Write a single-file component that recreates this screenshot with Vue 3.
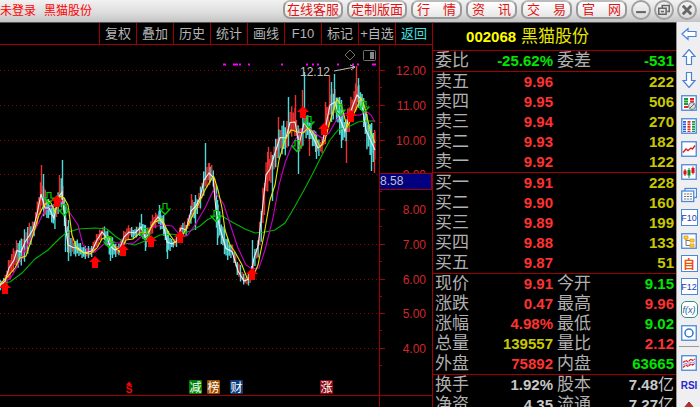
<template>
  <div class="terminal">

    <!-- 标题栏 -->
    <header class="titlebar">
      <div class="title-text">
        <span>未登录</span>
        <span>黑猫股份</span>
      </div>
      <div class="title-actions">
        <button v-for="p in pills" :key="p" type="button" class="pill">{{ p }}</button>
      </div>
      <div class="win-actions">
        <button type="button" class="win-btn" aria-label="最小化">
          <svg viewBox="0 0 20 20"><path d="M3 13h14" stroke-width="3" /></svg>
        </button>
        <button type="button" class="win-btn" aria-label="还原">
          <svg viewBox="0 0 20 20"><path d="M7.500 7V3.500h10v8.500h-3M2.500 7.500h10.500v8.500h-10.500zM5.500 12h4.500" stroke-width="2.200" /></svg>
        </button>
        <button type="button" class="win-btn" aria-label="关闭">
          <svg viewBox="0 0 20 20"><path d="M4 4l12 12M16 4l-12 12" stroke-width="4" /></svg>
        </button>
      </div>
    </header>

    <main class="body">
      <!-- K 线区 -->
      <section class="chart-pane">
        <nav class="toolbar">
          <button
            v-for="t in tools"
            :key="t"
            type="button"
            class="tool"
            :class="{ back: t === '返回' }"
          >{{ t }}</button>
        </nav>

        <svg class="chart" viewBox="0 45 432 362" preserveAspectRatio="xMinYMin meet">
          <!-- 网格与坐标轴 -->
          <g class="grid">
            <line v-for="g in gridLines" :key="g.label" x1="0" x2="379" :y1="g.y" :y2="g.y" />
          </g>
          <g class="axis">
            <path d="M379.500 45V407M0 395.500H432" />
            <path v-for="g in gridLines" :key="g.label" :d="`M380 ${g.y}h5M380 ${g.y + 17}h2`" />
          </g>
          <g class="axis-label">
            <text v-for="g in gridLines" :key="g.label" x="426" :y="g.y + 4.500">{{ g.label }}</text>
          </g>

          <!-- K 线 -->
          <path class="bar up" :d="upBars" />
          <path class="bar down" :d="downBars" />

          <!-- 均线 -->
          <polyline
            v-for="l in lines"
            :key="l.color"
            :points="l.points"
            :stroke="l.color"
            fill="none"
            stroke-width="1.100"
          />

          <!-- 买卖箭头 -->
          <path
            v-for="(a, i) in sells"
            :key="'s' + i"
            class="sell"
            :transform="`translate(${a[0]} ${a[1]})`"
            d="M-2 -5.500H2V0H5L0 5.500L-5 0H-2z"
          />
          <path
            v-for="(a, i) in buys"
            :key="'b' + i"
            class="buy"
            :transform="`translate(${a[0]} ${a[1]})`"
            d="M0 -6L6 0H3V6H-3V0H-6z"
          />

          <!-- 顶部信号点 -->
          <path class="dots" d="M223 64.500h3M233 64.500h5M239 64.500h2M248 64.500h2M281 64.500h2M306 64.500h2M312 64.500h2M317 64.500h2M337 64.500h2M352 64.500h2M357 64.500h2M372 64.500h4" />
          <text class="peak" x="300" y="76">12.12</text>
          <path class="pointer" d="M334 71L355 67M350 65l5 2l-4 3" />
          <path class="tag" d="M350 50l5 5l-5 5l-5 -5z" />
          <rect class="tag" x="363.500" y="50.500" width="12" height="10" rx="1" />
          <rect class="tag-fill" x="370" y="52" width="4" height="7" />

          <!-- 当前光标价 -->
          <rect class="cursor" x="379.500" y="173.500" width="52" height="16" />
          <text class="cursor-text" x="380" y="185">8.58</text>

          <!-- 事件标记 -->
          <path d="M126 385l3 -3.500l3 3.500z" fill="#f00" />
          <text class="dollar" x="129" y="393">S</text>
          <g v-for="m in marks" :key="m.text">
            <rect :x="m.x" y="380" width="13" height="14" rx="1" :fill="m.color" />
            <text class="mark" :x="m.x + 6.500" y="391.500">{{ m.text }}</text>
          </g>
        </svg>
      </section>

      <!-- 盘口 -->
      <section class="quote">
        <h1 class="stock"><b>002068</b> 黑猫股份</h1>
        <table v-for="(rows, si) in sections" :key="si">
          <tbody>
            <tr v-for="r in rows" :key="r[0]">
              <th scope="row">{{ r[0] }}</th>
              <td :class="r[2]">{{ r[1] }}</td>
              <th scope="row">{{ r[3] }}</th>
              <td :class="r[5]">{{ r[4] }}<span v-if="r[6]" class="unit">{{ r[6] }}</span></td>
            </tr>
          </tbody>
        </table>
      </section>

      <!-- 右侧工具条 -->
      <aside class="side">
        <button type="button" aria-label="后退">
          <svg viewBox="0 0 16 16"><path class="arrow" d="M1 8L7 2.500V5.500H15V10.500H7V13.500z" /></svg>
        </button>
        <button type="button" aria-label="上移">
          <svg viewBox="0 0 16 16"><path class="arrow" d="M8 .500L14 7.500H10.500V15.500H5.500V7.500H2z" /></svg>
        </button>
        <button type="button" aria-label="下移">
          <svg viewBox="0 0 16 16"><path class="arrow" d="M8 15.500L14 8.500H10.500V.500H5.500V8.500H2z" /></svg>
        </button>
        <button type="button" aria-label="自选报价">
          <svg viewBox="0 0 16 16">
            <rect class="frame" x=".75" y=".75" width="14.500" height="14.500" />
            <path d="M3 4h4M3 6.500h4M3 9h4" stroke="#1a9a3a" stroke-width="1.800" />
            <path d="M9 4h4M9 6.500h4M3 12h4" stroke="#e02828" stroke-width="1.800" />
            <circle cx="11" cy="11" r="3.500" fill="#ddd" stroke="#777" />
            <path d="M9 13l4 -4" stroke="#666" />
          </svg>
        </button>
        <button type="button" aria-label="行情列表">
          <svg viewBox="0 0 16 16">
            <rect class="frame" x=".75" y=".75" width="14.500" height="14.500" />
            <path d="M3.500 3v11" stroke="#2f62d8" stroke-width="3" stroke-dasharray="1.800 .700" />
            <path d="M8 3v11" stroke="#e02828" stroke-width="3" stroke-dasharray="1.800 .700" />
            <path d="M12.500 3v11" stroke="#169b3c" stroke-width="3" stroke-dasharray="1.800 .700" />
          </svg>
        </button>
        <button type="button" aria-label="分时走势">
          <svg viewBox="0 0 16 16">
            <rect class="frame" x=".75" y=".75" width="14.500" height="14.500" />
            <path d="M2 11.500L5 8l2 1.500L10 7l1.500 1L14 4.500" fill="none" stroke="#e02020" stroke-width="1.400" />
          </svg>
        </button>
        <button type="button" aria-label="K线图">
          <svg viewBox="0 0 16 16">
            <rect class="frame" x=".75" y=".75" width="14.500" height="14.500" />
            <path d="M4 5v7M12 2.500v8" stroke="#e01010" />
            <path d="M4 6.500v4M12 4v5" stroke="#e01010" stroke-width="3" />
            <path d="M8 4v10" stroke="#0b8c2c" />
            <path d="M8 6v5.500" stroke="#0b8c2c" stroke-width="3" />
          </svg>
        </button>
        <button type="button" aria-label="多窗口">
          <svg viewBox="0 0 16 16">
            <rect class="frame" x="4" y="1.500" width="11.500" height="9" />
            <rect class="frame" x=".75" y="4" width="12" height="10.500" />
            <path d="M3 7h8M3 9.500h8M3 12h8" stroke="#777" stroke-width="1.200" stroke-dasharray="2.200 .700" />
          </svg>
        </button>
        <button type="button" class="boxed">F10</button>
        <button type="button" aria-label="板块树">
          <svg viewBox="0 0 16 16">
            <rect class="frame" x=".75" y=".75" width="14.500" height="14.500" />
            <path d="M5 6v6.500h4M5 7.500h4" fill="none" stroke="#777" />
            <path d="M3 3h4v3H3zM9 6h4v3H9zM9 11h4v3H9z" fill="#ffcf3a" stroke="#e09a10" stroke-width=".800" />
          </svg>
        </button>
        <button type="button" class="boxed self">自</button>
        <button type="button" class="boxed">F12</button>
        <button type="button" class="boxed formula">f(x)</button>
        <button type="button" aria-label="圆">
          <svg viewBox="0 0 16 16">
            <rect class="frame" x=".75" y=".75" width="14.500" height="14.500" />
            <circle cx="8" cy="8" r="4" fill="none" stroke="#2c78c8" stroke-width="1.500" />
          </svg>
        </button>
        <hr>
        <button type="button" aria-label="指标">
          <svg viewBox="0 0 16 16">
            <rect class="frame" x=".75" y=".75" width="14.500" height="14.500" />
            <path d="M2 7.500l3 -2l2 1.500l3 -3l1.500 1.500L14 4" fill="none" stroke="#e02020" stroke-width="1.300" stroke-dasharray="3 .600" />
            <path d="M2 12.500l3 -2.500l2 1.500l3 -2.500l1.500 1L14 8.500" fill="none" stroke="#e02020" stroke-width="1.300" stroke-dasharray="3 .600" />
            <path d="M2 10l3 -2l2 1.500l3 -2.500l1.500 1L14 6.500" fill="none" stroke="#6a80f0" stroke-width=".900" />
          </svg>
        </button>
        <button type="button" class="rsi">RSI</button>
        <button type="button" aria-label="更多">
          <svg viewBox="0 0 16 16"><path d="M8 1L13 7H10V15H6V7H3z" fill="#c82828" stroke="#803030" /></svg>
        </button>
      </aside>
    </main>

  </div>
</template>

<script setup>
const pills = ['在线客服', '定制版面', '行\u2003情', '资\u2003讯', '交\u2003易', '官\u2003网']
const tools = ['复权', '叠加', '历史', '统计', '画线', 'F10', '标记', '+自选', '返回']

// [标签, 值, 颜色, 标签, 值, 颜色, 单位]
const sections = [
  [['委比', '-25.62%', 'green', '委差', '-531', 'green']],
  [
    ['卖五', '9.96', 'red', '', '222', 'yellow'],
    ['卖四', '9.95', 'red', '', '506', 'yellow'],
    ['卖三', '9.94', 'red', '', '270', 'yellow'],
    ['卖二', '9.93', 'red', '', '182', 'yellow'],
    ['卖一', '9.92', 'red', '', '122', 'yellow'],
  ],
  [
    ['买一', '9.91', 'red', '', '228', 'yellow'],
    ['买二', '9.90', 'red', '', '160', 'yellow'],
    ['买三', '9.89', 'red', '', '199', 'yellow'],
    ['买四', '9.88', 'red', '', '133', 'yellow'],
    ['买五', '9.87', 'red', '', '51', 'yellow'],
  ],
  [
    ['现价', '9.91', 'red', '今开', '9.15', 'green'],
    ['涨跌', '0.47', 'red', '最高', '9.96', 'red'],
    ['涨幅', '4.98%', 'red', '最低', '9.02', 'green'],
    ['总量', '139557', 'yellow', '量比', '2.12', 'red'],
    ['外盘', '75892', 'red', '内盘', '63665', 'green'],
  ],
  [
    ['换手', '1.92%', 'gray', '股本', '7.48', 'gray', '亿'],
    ['净资', '4.35', 'gray', '流通', '7.27', 'gray', '亿'],
  ],
]

const gridLines = [12, 11, 10, 9, 8, 7, 6, 5, 4].map((v, i) => ({
  label: v.toFixed(2),
  y: Math.round(70 + i * 34.75) + 0.5,
}))

const marks = [
  { text: '减', x: 189, color: '#008000' },
  { text: '榜', x: 207, color: '#994c00' },
  { text: '财', x: 230, color: '#0c3c78' },
  { text: '涨', x: 320, color: '#8c0a14' },
]

/** 波动区间：[x, 最高, 最低] */
const range = [
  [0, 279, 291], [5, 274, 289], [9, 252, 284], [14, 246, 274], [17, 233, 268], [21, 238, 266],
  [25, 222, 262], [29, 222, 250], [33, 219, 240], [37, 200, 228], [41, 172, 216], [45, 190, 226],
  [49, 200, 216], [54, 205, 232], [58, 182, 214], [62, 176, 208], [65, 205, 240], [68, 228, 262],
  [73, 238, 257], [78, 240, 256], [84, 246, 260], [92, 244, 258], [97, 230, 250], [102, 224, 240],
  [107, 228, 248], [110, 232, 260], [115, 242, 258], [120, 240, 256], [124, 226, 248], [129, 224, 240],
  [135, 228, 238], [141, 218, 236], [146, 228, 250], [152, 214, 236], [158, 208, 226], [163, 212, 235],
  [167, 228, 256], [172, 240, 248], [177, 234, 248], [181, 220, 236], [186, 222, 238], [191, 200, 222],
  [196, 196, 216], [200, 186, 210], [204, 165, 195], [209, 162, 184], [213, 164, 190], [216, 185, 235],
  [220, 215, 242], [226, 235, 262], [232, 245, 258], [238, 260, 282], [244, 275, 287], [250, 272, 285],
  [254, 248, 268], [258, 235, 258], [262, 185, 240], [266, 150, 200], [270, 148, 190], [275, 138, 168],
  [280, 120, 155], [286, 118, 158], [290, 105, 140], [295, 104, 140], [299, 128, 162], [304, 108, 138],
  [309, 118, 140], [313, 125, 150], [318, 138, 158], [322, 135, 155], [326, 105, 145], [330, 88, 122],
  [335, 86, 118], [340, 98, 140], [345, 118, 145], [350, 95, 132], [354, 85, 120], [357, 80, 110],
  [361, 88, 110], [366, 110, 150], [370, 120, 158], [375, 130, 170],
]

/** 长影线：[x, 最高, 最低, 是否上涨] */
const spikes = [
  [41, 165, 200, true], [43, 174, 210, false], [59, 175, 200, true], [62, 160, 200, false],
  [65, 205, 252, false], [68, 220, 261, false], [110, 240, 261, false], [141, 214, 230, false],
  [145, 225, 251, false], [159, 205, 220, false], [167, 230, 259, false], [191, 194, 215, true],
  [195, 195, 230, false], [205, 143, 180, false], [209, 163, 185, true], [217, 200, 245, false],
  [252, 240, 265, false], [268, 147, 165, true], [272, 155, 201, false], [278, 117, 150, true],
  [288, 97, 128, false], [295, 95, 125, true], [298, 130, 174, false], [304, 72, 118, false],
  [302, 90, 118, true], [309, 125, 156, true], [316, 135, 159, false], [325, 102, 130, true],
  [329, 75, 115, true], [331, 82, 122, false], [334, 74, 110, false], [341, 100, 148, false],
  [346, 125, 163, true], [356, 66, 110, true], [358, 78, 108, false], [371, 125, 171, false],
  [374, 130, 173, true],
]

const whiteMa = range.map(([x, hi, lo]) => `${x},${(hi + lo) / 2}`).join(' ')

const lines = [
  { color: '#00b400', points: '0,283 10,282 22,273 35,259 48,250 60,238 66,233 78,229 95,228 107,229 115,236 125,243 135,245 145,241 152,239 160,235 170,234 180,235 190,231 200,226 207,220 215,216 222,216 232,222 245,229 255,233 265,232 275,230 285,223 294,208 304,190 312,175 322,155 330,140 338,130 348,127 358,122 366,121 375,121' },
  { color: '#c800c8', points: '0,283 10,279 17,267 25,250 35,230 45,210 52,207 60,200 65,205 70,213 78,225 83,245 88,251 95,252 105,243 112,242 125,244 134,243 142,236 152,227 163,225 172,226 180,235 187,236 195,225 205,208 213,191 219,197 224,205 230,224 238,248 246,265 252,269 259,268 265,250 273,218 279,185 285,163 292,145 300,132 309,128 316,134 322,138 329,133 337,119 345,113 352,115 360,115 367,112 371,115 375,122' },
  { color: '#f0f0f0', points: whiteMa },
  { color: '#e6e600', points: '0,284 8,276 15,268 20,258 26,256 32,238 39,215 44,205 50,201 55,212 60,196 64,198 68,205 72,235 77,249 84,253 90,254 97,248 102,239 108,236 114,246 120,252 126,240 133,239 140,233 148,232 155,222 162,219 168,232 175,242 180,240 188,225 198,205 205,190 212,178 214,177 218,190 222,208 225,230 230,245 235,252 242,265 247,278 252,279 258,265 264,235 270,200 275,185 279,160 285,140 291,130 298,132 303,133 308,128 313,132 320,147 325,140 331,118 337,99 342,107 347,127 352,118 357,107 361,98 365,108 370,130 375,143' },
]

const buys = [[5, 288], [57, 201], [95, 262], [123, 250], [151, 241], [180, 237], [252, 274], [303, 112], [324, 129], [351, 116]]
const sells = [[49, 198], [64, 210], [109, 242], [145, 234], [165, 209], [216, 216], [297, 146], [309, 122], [340, 110], [364, 107]]

/** 按区间插值生成 K 线，趋势决定红绿比例 */
function buildBars() {
  const bars = [...spikes]
  let k = 0
  for (let x = 0; x <= 375; x += 1.6) {
    while (k < range.length - 2 && range[k + 1][0] < x) k++
    const a = range[k]
    const b = range[k + 1]
    const t = (x - a[0]) / (b[0] - a[0])
    const hi = a[1] + (b[1] - a[1]) * t
    const lo = a[2] + (b[2] - a[2]) * t
    const seed = (Math.round(x * 10) * 137 + 31) % 97 / 97
    const seed2 = (Math.round(x * 10) * 53 + 17) % 89 / 89
    const size = lo - hi
    const rising = b[1] + b[2] < a[1] + a[2]
    bars.push([x, hi + size * 0.3 * seed, lo - size * 0.3 * seed2, rising ? seed2 > 0.3 : seed2 > 0.75])
  }
  return bars
}

const bars = buildBars()
const toPath = (list) => list.map(([x, hi, lo]) => `M${(x + 0.5).toFixed(1)} ${hi.toFixed(1)}V${lo.toFixed(1)}`).join('')
const upBars = toPath(bars.filter((b) => b[3]))
const downBars = toPath(bars.filter((b) => !b[3]))
</script>

<style>
body {
  margin: 0;
  background: #000;
}
</style>

<style scoped>
.terminal {
  display: flex;
  flex-direction: column;
  height: 100vh;
  overflow: hidden;
  background: #000;
  font-family: "Liberation Sans", "Noto Sans CJK SC", sans-serif;
  font-size: 12px;
}

button {
  font-family: inherit;
  padding: 0;
  margin: 0;
  border: 0;
  background: none;
}

/* ── 标题栏 ── */
.titlebar {
  display: flex;
  align-items: flex-start;
  flex-shrink: 0;
  height: 22px;
  padding-right: 3px;
  box-sizing: border-box;
  background: linear-gradient(#f2f2f2, #dcdcdc 60%, #c4c4c4);
}
.title-text {
  display: flex;
  flex: 1;
  gap: 8px;
  line-height: 22px;
  color: #f00;
}
.title-actions {
  display: flex;
  gap: 4px;
}
.pill {
  height: 19px;
  padding: 0 4px;
  border: 2px solid #999;
  border-top-color: #bbb;
  border-radius: 7px;
  background: linear-gradient(#fff, #e6e6e6);
  font-size: 13px;
  line-height: 14px;
  color: #e01414;
  white-space: nowrap;
}
.pill:nth-child(-n + 2) { padding: 0 2px; }
.win-actions {
  display: flex;
  gap: 3px;
  margin-left: 4px;
}
.win-btn {
  display: flex;
  align-items: center;
  justify-content: center;
  width: 20px;
  height: 20px;
  box-sizing: border-box;
  border: 2px solid #a0a0a0;
  border-radius: 50%;
  background: linear-gradient(#f4f4f4, #dadada);
}
.win-btn svg {
  width: 14px;
  height: 14px;
  flex-shrink: 0;
  fill: none;
  stroke: #666;
}

/* ── 主体 ── */
.body {
  display: grid;
  grid-template-columns: 1fr 244px 24px;
  flex: 1;
  min-height: 0;
}
.chart-pane {
  display: flex;
  flex-direction: column;
  min-width: 0;
  min-height: 0;
}
.toolbar {
  display: flex;
  justify-content: flex-end;
  flex-shrink: 0;
  height: 23px;
  box-sizing: border-box;
  border-top: 1px solid #555;
  border-bottom: 1px solid #a00000;
}
.tool {
  flex: 0 1 37px;
  box-sizing: border-box;
  border-left: 1px solid #a00000;
  font-size: 13px;
  line-height: 21px;
  color: #b4b4b4;
  white-space: nowrap;
}
.tool.back { color: #40e0e0; }

/* ── 图表 ── */
.chart {
  display: block;
  width: 100%;
  flex: 1;
  min-height: 0;
}
.grid line {
  stroke: #900000;
  stroke-dasharray: 1 3;
}
.axis path {
  stroke: #a00000;
  fill: none;
}
.axis-label text {
  fill: #d02828;
  font-size: 12px;
  text-anchor: end;
}
.bar { stroke-width: 1.4; }
.up { stroke: #e83030; }
.down { stroke: #50d8d8; }
.buy { fill: #f00; }
.sell {
  fill: none;
  stroke: #00d000;
  stroke-width: 1.2;
}
.dots {
  stroke: #f0f;
  stroke-width: 2;
}
.peak {
  fill: #c0c0c0;
  font-size: 12px;
}
.pointer {
  fill: none;
  stroke: #c0c0c0;
}
.tag {
  fill: none;
  stroke: #707070;
}
.tag-fill { fill: #888; }
.cursor {
  fill: #000080;
  stroke: #a00000;
}
.cursor-text {
  fill: #c0c0c0;
  font-size: 12px;
}
.dollar {
  fill: #f00;
  font-size: 10px;
  font-weight: bold;
  text-anchor: middle;
}
.mark {
  fill: #fff;
  font-size: 12px;
  text-anchor: middle;
}

/* ── 盘口 ── */
.quote {
  border-top: 1px solid #555;
  border-left: 1px solid #a00000;
  overflow: hidden;
}
.stock {
  height: 27px;
  margin: 0;
  padding-right: 54px;
  font-size: 17px;
  font-weight: normal;
  line-height: 27px;
  text-align: center;
  color: #e6e600;
}
.stock b {
  font-size: 15px;
  color: #ff0;
}
table {
  width: 100%;
  table-layout: fixed;
  border-collapse: separate;
  border-spacing: 0;
  border-top: 1px solid #a00000;
}
th,
td {
  height: 20px;
  padding: 0;
  line-height: 20px;
  white-space: nowrap;
}
th {
  width: 38px;
  padding-left: 2px;
  box-sizing: border-box;
  font-size: 17px;
  font-weight: normal;
  text-align: left;
  color: #b0b0b0;
}
th:nth-child(3) { padding-left: 4px; }
td {
  font-size: 15px;
  font-weight: bold;
  text-align: right;
}
td:nth-child(2) { width: 82px; }
td:last-child { padding-right: 2px; }
.red { color: #ff3232; }
.green { color: #00e600; }
.yellow { color: #c8c800; }
.gray { color: #c8c8c8; }
.unit {
  font-size: 16px;
  font-weight: normal;
}

/* ── 侧边工具条 ── */
.side {
  display: flex;
  flex-direction: column;
  align-items: center;
  overflow: hidden;
  padding-left: 1px;
  border-left: 1px solid #999;
  background: #efeff2;
}
.side button {
  display: flex;
  align-items: center;
  justify-content: center;
  flex-shrink: 0;
  width: 100%;
  height: 23px;
}
.side svg {
  width: 16px;
  height: 16px;
}
.arrow {
  fill: #fff;
  stroke: #4a80d8;
  stroke-width: 1.2;
}
.frame {
  fill: #fff;
  stroke: #4a88dc;
  stroke-width: 1.3;
}
.side .boxed {
  width: 17px;
  height: 17px;
  margin: 3px 0;
  box-sizing: border-box;
  border: 1px solid #4a88dc;
  background: #fff;
  font-size: 9px;
  color: #2040b0;
}
.side .self {
  font-size: 12px;
  font-weight: bold;
  color: #f05010;
}
.side .formula {
  border-color: #30907c;
  border-radius: 5px;
  font-style: italic;
  color: #2060a0;
}
.side .rsi {
  font-size: 10px;
  font-weight: bold;
  color: #2828c8;
}
hr {
  width: 20px;
  margin: 2px 0 4px;
  border: 0;
  border-top: 1px solid #999;
  flex-shrink: 0;
}
</style>
